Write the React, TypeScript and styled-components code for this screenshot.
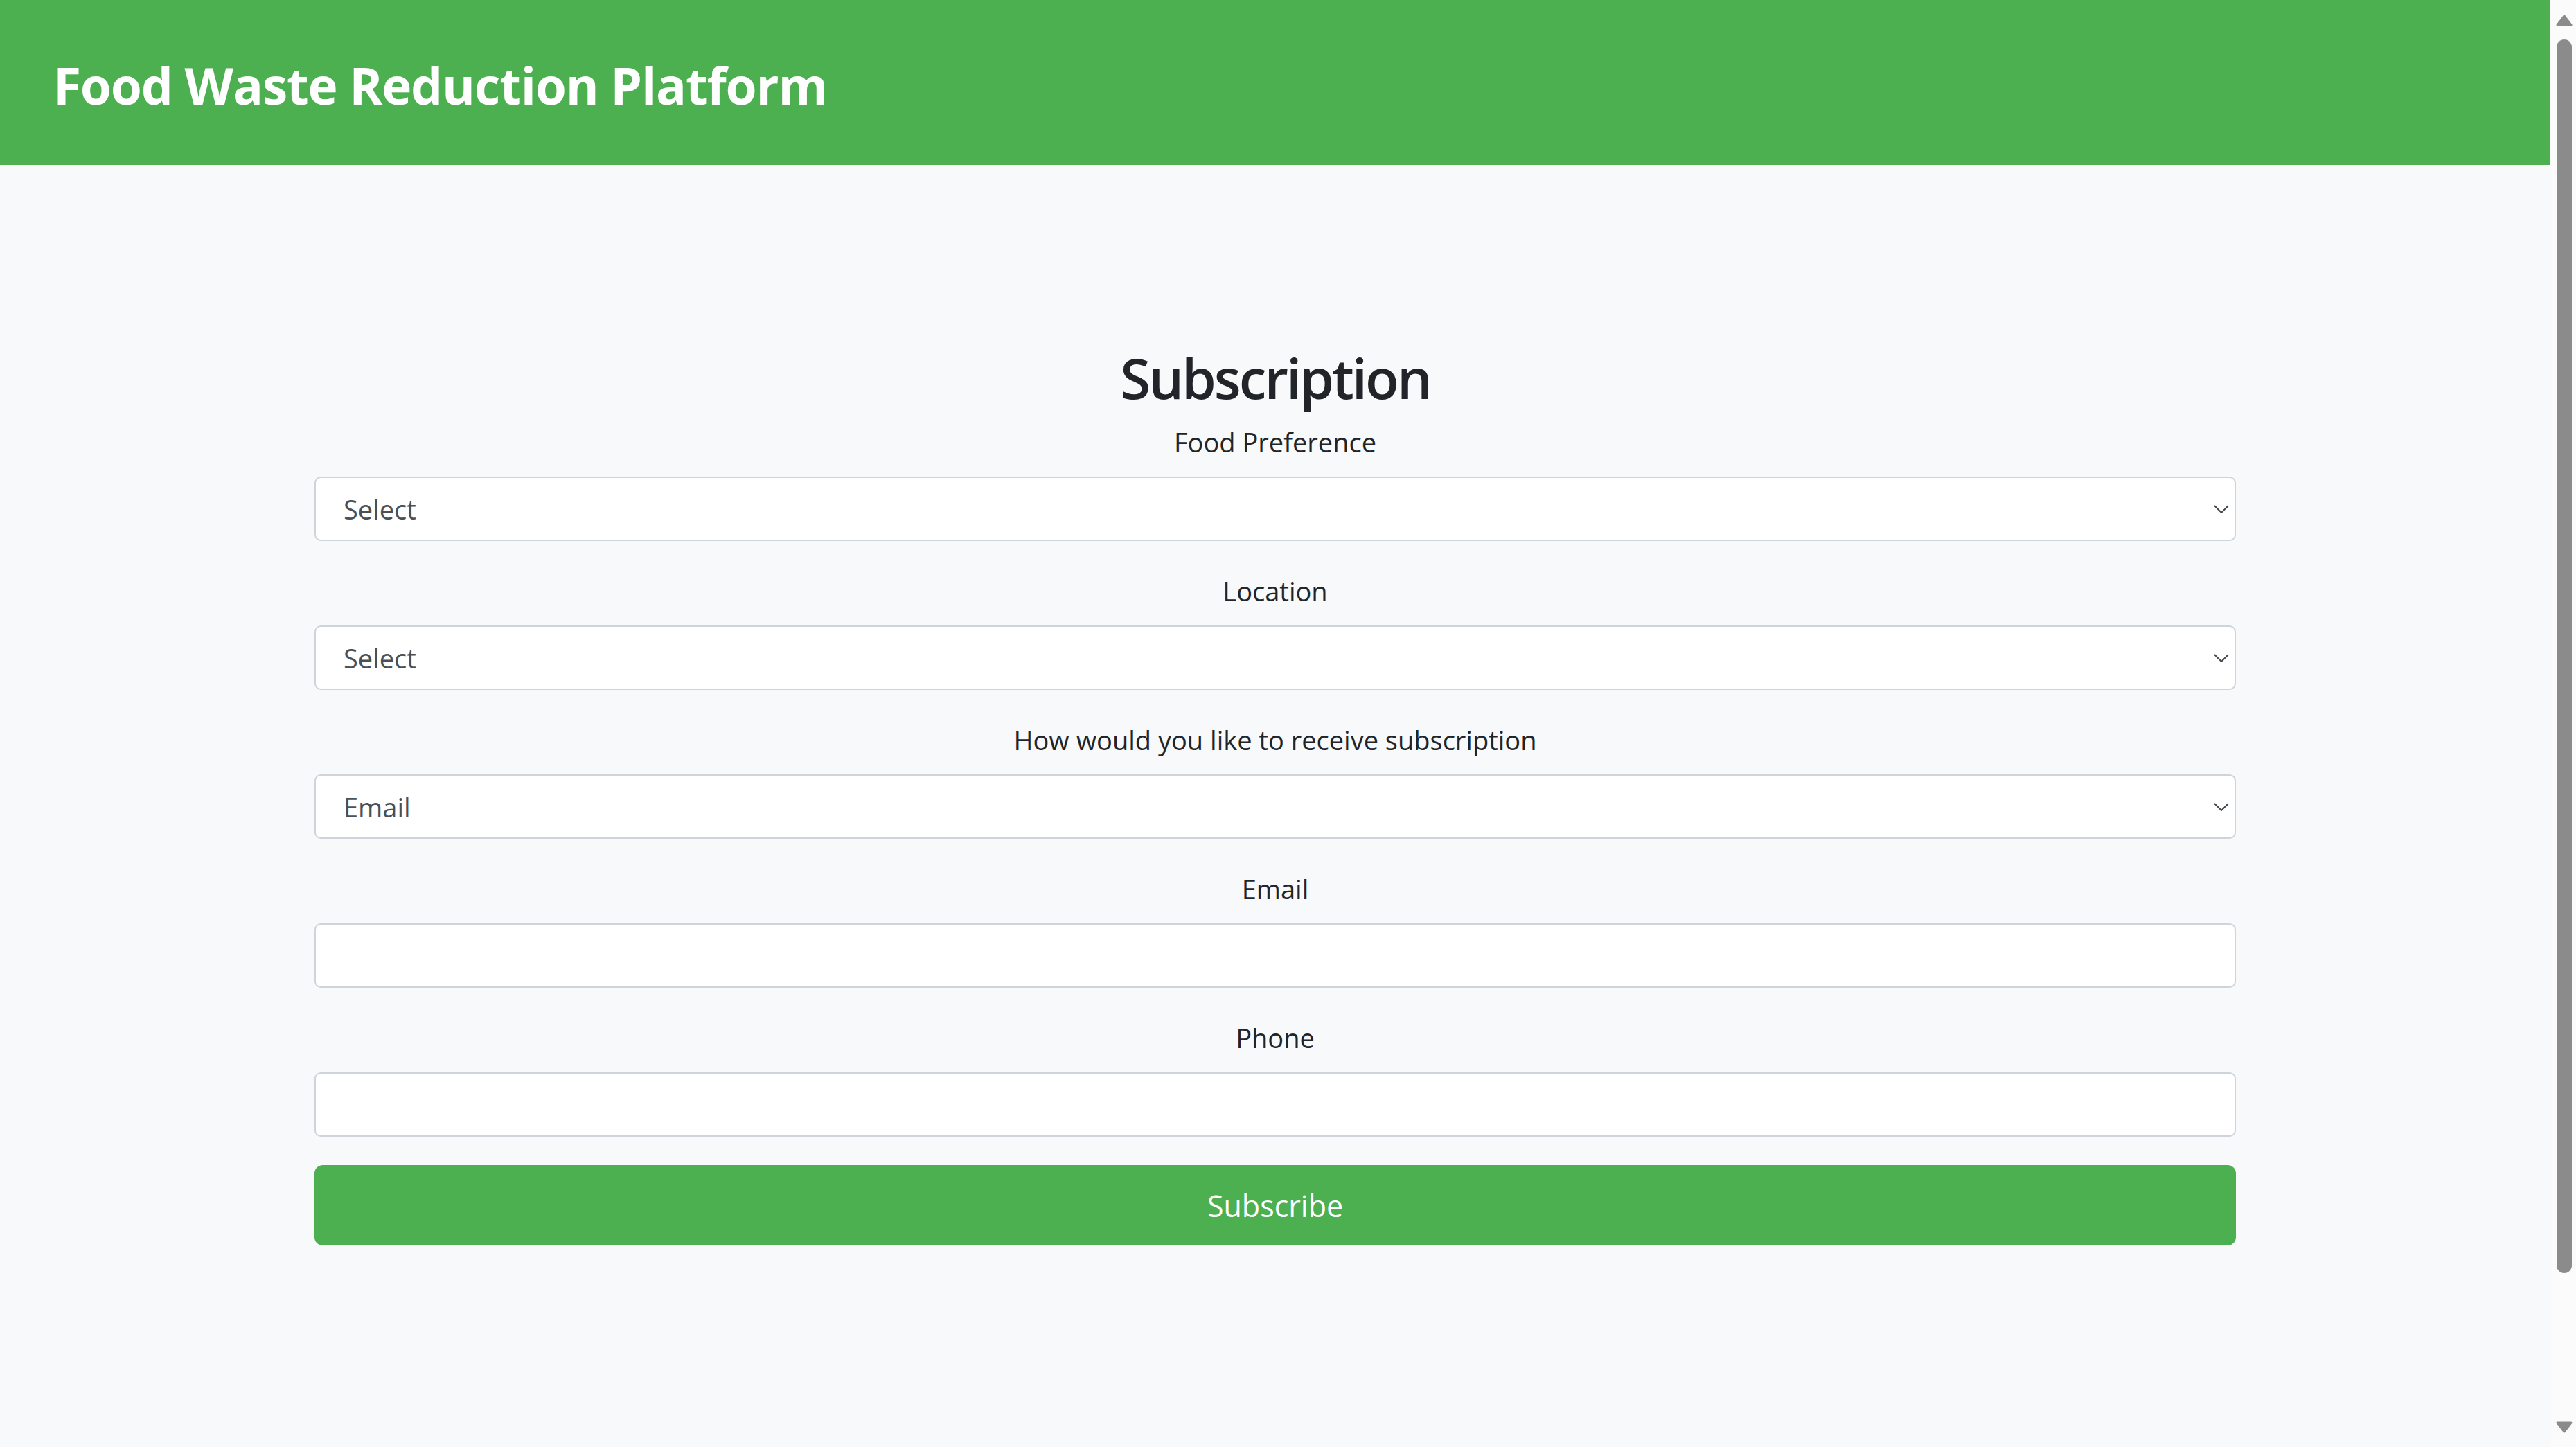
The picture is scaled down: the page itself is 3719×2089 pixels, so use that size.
import React from 'react';
import styled, { createGlobalStyle, css } from 'styled-components';

const GlobalStyle = createGlobalStyle`
  html, body {
    margin: 0;
    padding: 0;
    overflow: hidden;
  }
  body {
    background: #f8f9fa;
    color: #212529;
    font-family: "Segoe UI", "Open Sans", "Noto Sans", sans-serif;
  }
  * {
    box-sizing: border-box;
  }
`;

const Shell = styled.div`
  height: 100vh;
  overflow-y: auto;
  padding-right: 37px;
`;

// windows style scroll rail that sits in the gutter
const ScrollRail = styled.div`
  position: fixed;
  top: 0;
  right: 0;
  width: 37px;
  height: 100vh;
  background: #fbfbfb;
  display: flex;
  flex-direction: column;
  align-items: center;
  padding: 21px 0 20px 2px;
`;

const Thumb = styled.div`
  width: 22px;
  height: 1781px;
  margin-top: 19px;
  border-radius: 11px;
  background: #8b8b8b;
`;

const Spacer = styled.div`
  flex: 1;
`;

const Header = styled.header`
  height: 238px;
  background: #4caf50;
  display: flex;
  align-items: center;
  padding: 8px 77px 0;
`;

const Brand = styled.h1`
  margin: 0;
  color: #fff;
  font-size: 73px;
  font-weight: 700;
  line-height: 1.2;
  letter-spacing: -1.2px;
`;

const Main = styled.main`
  min-height: 2132px;
  padding-top: 259px;
`;

const Form = styled.form`
  width: 2774px;
  margin: 0 auto;
  display: flex;
  flex-direction: column;
  text-align: center;
`;

const Title = styled.h2`
  margin: 0 0 17px;
  font-size: 80px;
  font-weight: 600;
  line-height: 1.2;
  letter-spacing: -3px;
`;

const Field = styled.div`
  margin-bottom: 44px;
`;

const Label = styled.label`
  display: block;
  font-size: 38px;
  line-height: 57px;
  margin-bottom: 21px;
`;

const control = css`
  display: block;
  width: 100%;
  height: 93px;
  padding: 0 40px;
  border: 2px solid #ced4da;
  border-radius: 9px;
  background: #fff;
  color: #495057;
  font-family: inherit;
  font-size: 38px;
  text-align: left;
  outline: none;
`;

const SelectWrap = styled.div`
  position: relative;
`;

const Select = styled.select`
  ${control}
  appearance: none;
  -webkit-appearance: none;
`;

const Chevron = styled.svg`
  position: absolute;
  right: 10px;
  top: 50%;
  margin-top: -6px;
  pointer-events: none;
`;

const Input = styled.input`
  ${control}
`;

const Button = styled.button`
  height: 116px;
  margin-top: -3px;
  border: none;
  border-radius: 12px;
  background: #4caf50;
  color: #fff;
  font-family: inherit;
  font-size: 43px;
  cursor: pointer;
`;

const ArrowDown = () => (
  <Chevron width="22" height="12" viewBox="0 0 22 12">
    <polyline points="1,1 11,11 21,1" fill="none" stroke="#3f454b" strokeWidth="2" />
  </Chevron>
);

const RailArrow = ({ down }: { down?: boolean }) => (
  <svg width="24" height="17" viewBox="0 0 24 17">
    <polygon
      points={down ? '2,2 22,2 12,15' : '12,2 22,15 2,15'}
      fill="#8b8b8b"
      stroke="#8b8b8b"
      strokeWidth="3"
      strokeLinejoin="round"
    />
  </svg>
);

type Option = { label: string; options: string[] };

const selects: Option[] = [
  { label: 'Food Preference', options: ['Select', 'Vegetarian', 'Non-Vegetarian', 'Vegan'] },
  { label: 'Location', options: ['Select'] },
  { label: 'How would you like to receive subscription', options: ['Email', 'Phone', 'Both'] },
];

const inputs = [
  { label: 'Email', type: 'email' },
  { label: 'Phone', type: 'tel' },
];

export default function App() {
  return (
    <Shell>
      <GlobalStyle />
      <Header>
        <Brand>Food Waste Reduction Platform</Brand>
      </Header>
      <Main>
        <Form onSubmit={(e) => e.preventDefault()}>
          <Title>Subscription</Title>
          {selects.map((s) => (
            <Field key={s.label}>
              <Label>{s.label}</Label>
              <SelectWrap>
                <Select defaultValue={s.options[0]}>
                  {s.options.map((o) => (
                    <option key={o}>{o}</option>
                  ))}
                </Select>
                <ArrowDown />
              </SelectWrap>
            </Field>
          ))}
          {inputs.map((i) => (
            <Field key={i.label}>
              <Label>{i.label}</Label>
              <Input type={i.type} />
            </Field>
          ))}
          <Button type="submit">Subscribe</Button>
        </Form>
      </Main>
      <ScrollRail>
        <RailArrow />
        <Thumb />
        <Spacer />
        <RailArrow down />
      </ScrollRail>
    </Shell>
  );
}
